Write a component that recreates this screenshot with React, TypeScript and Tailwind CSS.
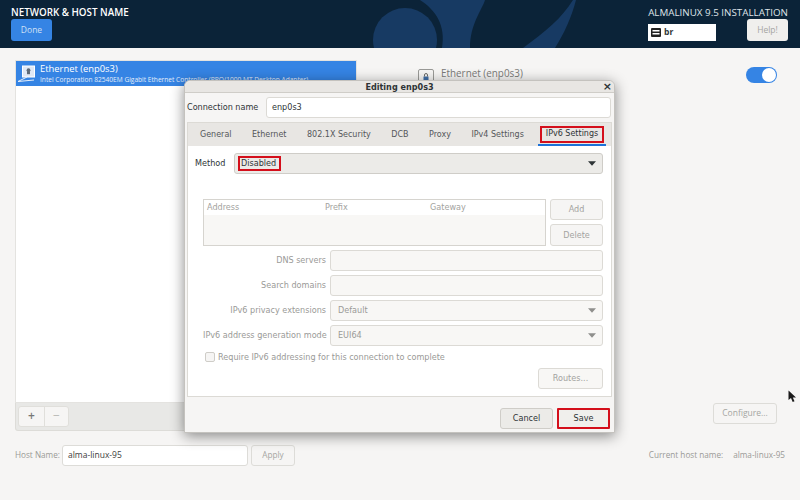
const dlgFont = { fontFamily: '"DejaVu Sans", sans-serif' };

function Caret({ dim }: { dim?: boolean }) {
  return (
    <svg width="8" height="5" viewBox="0 0 9 5" className="shrink-0">
      <path d="M0 0h9L4.5 5z" fill={dim ? '#8f8f8c' : '#2e3436'} />
    </svg>
  );
}

function HeaderArt() {
  return (
    <svg className="absolute inset-0 h-full w-full" viewBox="0 0 800 48" preserveAspectRatio="none">
      <circle cx="405" cy="40" r="32" fill="#173a63" />
      <path d="M420 0H485C482 10 470 24 470 48H442C446 26 436 10 420 0Z" fill="#173a63" />
      <path d="M573 0H576C572 16 564 34 555 48H523C545 32 562 18 573 0Z" fill="#173a63" />
    </svg>
  );
}

function ListIcon() {
  return (
    <svg width="18" height="18" viewBox="0 0 18 18" fill="none" className="shrink-0">
      <rect x="5.5" y="1" width="12" height="11" fill="#dfe8f5" stroke="#ffffff" strokeWidth="1" />
      <circle cx="11.5" cy="5.2" r="1.9" fill="#5f6b78" />
      <rect x="10" y="6.2" width="3" height="3" fill="#5f6b78" />
      <path d="M10 12L1 16.5L17 15" stroke="#e8f0fa" strokeWidth="1" />
    </svg>
  );
}

function DetailIcon() {
  return (
    <svg width="16" height="16" viewBox="0 0 16 16" fill="none" className="mt-[2px] shrink-0">
      <rect x="0.5" y="0.5" width="15" height="15" rx="1.5" fill="#f6f5f4" stroke="#9a9a97" />
      <rect x="5.5" y="7.5" width="5" height="5.5" fill="#3f6fa8" />
      <path d="M6.5 7.5V6a1.5 1.5 0 0 1 3 0v1.5" stroke="#6b6b68" />
    </svg>
  );
}

function DialogRow({ label, children }: { label: string; children: React.ReactNode }) {
  return (
    <>
      <div className="whitespace-nowrap text-right text-[8.1px] text-[#9a9a97]">{label}</div>
      {children}
    </>
  );
}

function DimField({ value }: { value?: string }) {
  return (
    <div className="flex h-[21px] items-center justify-between rounded-[3px] border border-[#dcdad5] bg-[#f8f7f5] pl-[7px] pr-[6px] text-[8.1px] text-[#9a9a97]">
      <span>{value}</span>
      {value && <Caret dim />}
    </div>
  );
}

function EditDialog() {
  const tabs = ['General', 'Ethernet', '802.1X Security', 'DCB', 'Proxy', 'IPv4 Settings'];
  return (
    <div
      className="absolute left-[184px] top-[80px] flex h-[353px] w-[431px] flex-col rounded-t-[6px] border border-[#c4c2be] bg-[#f6f5f4] shadow-[0_3px_14px_rgba(0,0,0,0.45)]"
      style={dlgFont}
    >
      <div className="relative flex h-[12px] shrink-0 items-center justify-center rounded-t-[6px] border-b border-[#cfcdc8] bg-[#e8e6e3] pt-[2px] text-[8.1px] font-bold text-[#2e3436]">
        Editing enp0s3
        <span className="absolute right-[2px] top-[-1px] text-[11px] leading-[14px]">×</span>
      </div>

      <div className="flex h-[29px] shrink-0 items-center px-[2px] pr-[3px]">
        <span className="w-[79px] whitespace-nowrap text-[8.1px] text-[#2e3436]">Connection name</span>
        <div className="flex h-[21px] flex-1 items-center rounded-[3px] border border-[#dcdad5] bg-white pl-[5px] text-[8.1px] text-[#2e3436]">
          enp0s3
        </div>
      </div>

      <div className="mx-[2px] flex flex-1 flex-col border border-[#dcdad5] bg-white">
        <div className="flex h-[23px] shrink-0 items-center justify-between whitespace-nowrap bg-[#e8e6e3] pl-[12px] pr-[5px] text-[8px] text-[#55575a]">
          <div className="flex gap-[20.5px]">
            {tabs.map((t) => (
              <span key={t}>{t}</span>
            ))}
          </div>
          <div className="relative flex h-[23px] w-[68px] shrink-0 items-center justify-center border-b-2 border-[#1c71d8] text-[#2e3436]">
            IPv6 Settings
            <div className="absolute inset-x-[2px] top-[3px] h-[17px] border-2 border-[#d40f1b]" />
          </div>
        </div>

        <div className="flex flex-col px-[6px] pt-[7px]">
          <div className="flex h-[21px] items-center">
            <span className="w-[40px] pl-[1px] text-[8.1px] text-[#2e3436]">Method</span>
            <div className="relative flex h-[21px] w-[369px] items-center justify-between rounded-[3px] border border-[#cfcdc8] bg-[#ecebe8] pl-[6px] pr-[6px] text-[8.1px] text-[#2e3436]">
              <span>Disabled</span>
              <Caret />
              <div className="absolute left-[3px] top-[2px] h-[15px] w-[43px] border-2 border-[#d40f1b]" />
            </div>
          </div>

          <div className="mt-[25px] flex gap-[4px] pl-[9px]">
            <div className="flex h-[47px] w-[343px] flex-col border border-[#d6d4cf] bg-[#f8f7f5] text-[8.1px] text-[#a3a3a0]">
              <div className="grid h-[15px] shrink-0 grid-cols-[117px_106px_1fr] items-center bg-white pl-[3px]">
                <span>Address</span>
                <span className="pl-[1px]">Prefix</span>
                <span>Gateway</span>
              </div>
            </div>
            <div className="flex w-[53px] flex-col gap-[4px]">
              <div className="flex h-[21px] items-center justify-center rounded-[3px] border border-[#dcdad5] bg-[#f6f5f4] text-[8.1px] text-[#a3a3a0]">Add</div>
              <div className="flex h-[22px] items-center justify-center rounded-[3px] border border-[#dcdad5] bg-[#f6f5f4] text-[8.1px] text-[#a3a3a0]">Delete</div>
            </div>
          </div>

          <div className="mt-[4px] grid grid-cols-[123px_273px] items-center gap-x-[4px] gap-y-[4px] pl-[9px]">
            <DialogRow label="DNS servers"><DimField /></DialogRow>
            <DialogRow label="Search domains"><DimField /></DialogRow>
            <DialogRow label="IPv6 privacy extensions"><DimField value="Default" /></DialogRow>
            <DialogRow label="IPv6 address generation mode"><DimField value="EUI64" /></DialogRow>
          </div>

          <div className="mt-[5px] flex h-[12px] items-center gap-[3px] pl-[11px] text-[8.1px] text-[#9a9a97]">
            <div className="h-[10px] w-[10px] rounded-[2px] border border-[#cfcdc8] bg-[#f6f5f4]" />
            Require IPv6 addressing for this connection to complete
          </div>

          <div className="mt-[5px] flex justify-end pr-[2px]">
            <div className="flex h-[21px] w-[65px] items-center justify-center rounded-[3px] border border-[#dcdad5] bg-[#f8f7f5] text-[8.1px] text-[#a3a3a0]">Routes...</div>
          </div>
        </div>
      </div>

      <div className="flex h-[35px] shrink-0 items-end justify-end gap-[4px] pb-[3px] pr-[4px] text-[8.1px] text-[#2e3436]">
        <div className="flex h-[21px] w-[53px] items-center justify-center rounded-[3px] border border-[#cfcdc8] bg-[#ecebe8]">Cancel</div>
        <div className="flex h-[21px] w-[53px] items-center justify-center rounded-[1px] border-2 border-[#d40f1b] bg-[#f0efec]">Save</div>
      </div>
    </div>
  );
}

export default function App() {
  return (
    <div className="relative flex h-[500px] w-[800px] flex-col overflow-hidden bg-[#f6f5f4]" style={{ fontFamily: '"Open Sans", sans-serif' }}>
      <header className="relative flex h-[48px] shrink-0 justify-between bg-[#0b2338] pl-[11px] pr-[12px] pt-[6px]">
        <HeaderArt />
        <div className="relative">
          <div className="whitespace-nowrap text-[9.8px] font-semibold leading-[13px] text-white">NETWORK &amp; HOST NAME</div>
          <div className="flex h-[22px] w-[41px] items-center justify-center rounded-[3px] bg-[#3584e4] text-[8.5px] text-[#cfe0f5]">Done</div>
        </div>
        <div className="relative flex w-[140px] flex-col">
          <div className="whitespace-nowrap text-right text-[9.8px] leading-[13px] text-[#dfe3e8]">ALMALINUX 9.5 INSTALLATION</div>
          <div className="flex items-start justify-between">
            <div className="mt-[5px] flex h-[17px] w-[68px] items-center gap-[3px] bg-white pl-[3px] text-[8.5px] font-bold text-[#2e3436]">
              <svg width="10" height="9" viewBox="0 0 10 9"><rect width="10" height="9" rx="1" fill="#222" /><path d="M1.5 2h7v1.6h-7zM1.5 5h7v1.6h-7z" fill="#fff" /></svg>
              br
            </div>
            <div className="flex h-[22px] w-[41px] items-center justify-center rounded-[3px] bg-[#f0efed] text-[8.5px] text-[#a5a5a2]">Help!</div>
          </div>
        </div>
      </header>

      <main className="flex flex-1 flex-col px-[15px] pt-[12px]">
        <div className="flex h-[371px]">
          <div className="flex w-[342px] flex-col">
            <div className="flex-1 border border-[#e4e3e0] bg-white">
              <div className="flex h-[25px] items-center gap-[5px] bg-[#3584e4] pl-[1px] text-white">
                <ListIcon />
                <div className="min-w-0 flex-1 overflow-hidden whitespace-nowrap">
                  <div className="text-[9.4px] leading-[12px]">Ethernet (enp0s3)</div>
                  <div className="text-[6.6px] leading-[9px] text-[#e3edf9]">Intel Corporation 82540EM Gigabit Ethernet Controller (PRO/1000 MT Desktop Adapter)</div>
                </div>
              </div>
            </div>
            <div className="flex h-[28px] shrink-0 items-center rounded-b-[3px] border border-t-0 border-[#dddcd8] bg-[#e8e8e6] pl-[2px]">
              <div className="flex h-[21px] w-[51px] rounded-[3px] border border-[#e0dfdb] bg-[#f6f5f4] text-[12px] leading-[18px]">
                <span className="w-[26px] border-r border-[#e0dfdb] text-center font-semibold text-[#777]">+</span>
                <span className="flex-1 text-center text-[#b5b5b2]">−</span>
              </div>
            </div>
          </div>
          <div className="flex flex-1 flex-col pl-[61px] pr-[8px]">
            <div className="flex items-start justify-between pt-[7px]">
              <div className="flex items-start gap-[7px]">
                <DetailIcon />
                <span className="text-[9.9px] leading-[12px] text-[#7a7a78]">Ethernet (enp0s3)</span>
              </div>
              <div className="flex h-[16px] w-[31px] items-center justify-end rounded-full bg-[#3584e4] pr-[1px]">
                <div className="h-[14px] w-[14px] rounded-full bg-white" />
              </div>
            </div>
            <div className="mt-auto flex justify-end pb-[7px]">
              <div className="flex h-[21px] w-[64px] items-center justify-center rounded-[3px] border border-[#dddcd8] text-[8.5px] text-[#a5a5a2]">Configure...</div>
            </div>
          </div>
        </div>

        <div className="mt-[14px] flex items-center text-[8.2px]">
          <span className="w-[47px] whitespace-nowrap text-[#9a9a97]">Host Name:</span>
          <div className="flex h-[21px] w-[186px] items-center rounded-[3px] border border-[#dddcd8] bg-white pl-[5px] text-[8.5px] text-[#3d3d3d]">alma-linux-95</div>
          <div className="ml-[3px] flex h-[21px] w-[44px] items-center justify-center rounded-[3px] border border-[#dddcd8] text-[#a5a5a2]">Apply</div>
          <div className="ml-auto flex gap-[10px] text-[#9a9a97]">
            <span>Current host name:</span>
            <span>alma-linux-95</span>
          </div>
        </div>
      </main>

      <EditDialog />

      <svg className="absolute left-[788px] top-[390px]" width="9" height="13" viewBox="0 0 9 13">
        <path d="M0.5 0.5V10L3 8L4.7 12L6.5 11.2L4.8 7.5H8Z" fill="#1a1a1a" />
      </svg>
    </div>
  );
}
